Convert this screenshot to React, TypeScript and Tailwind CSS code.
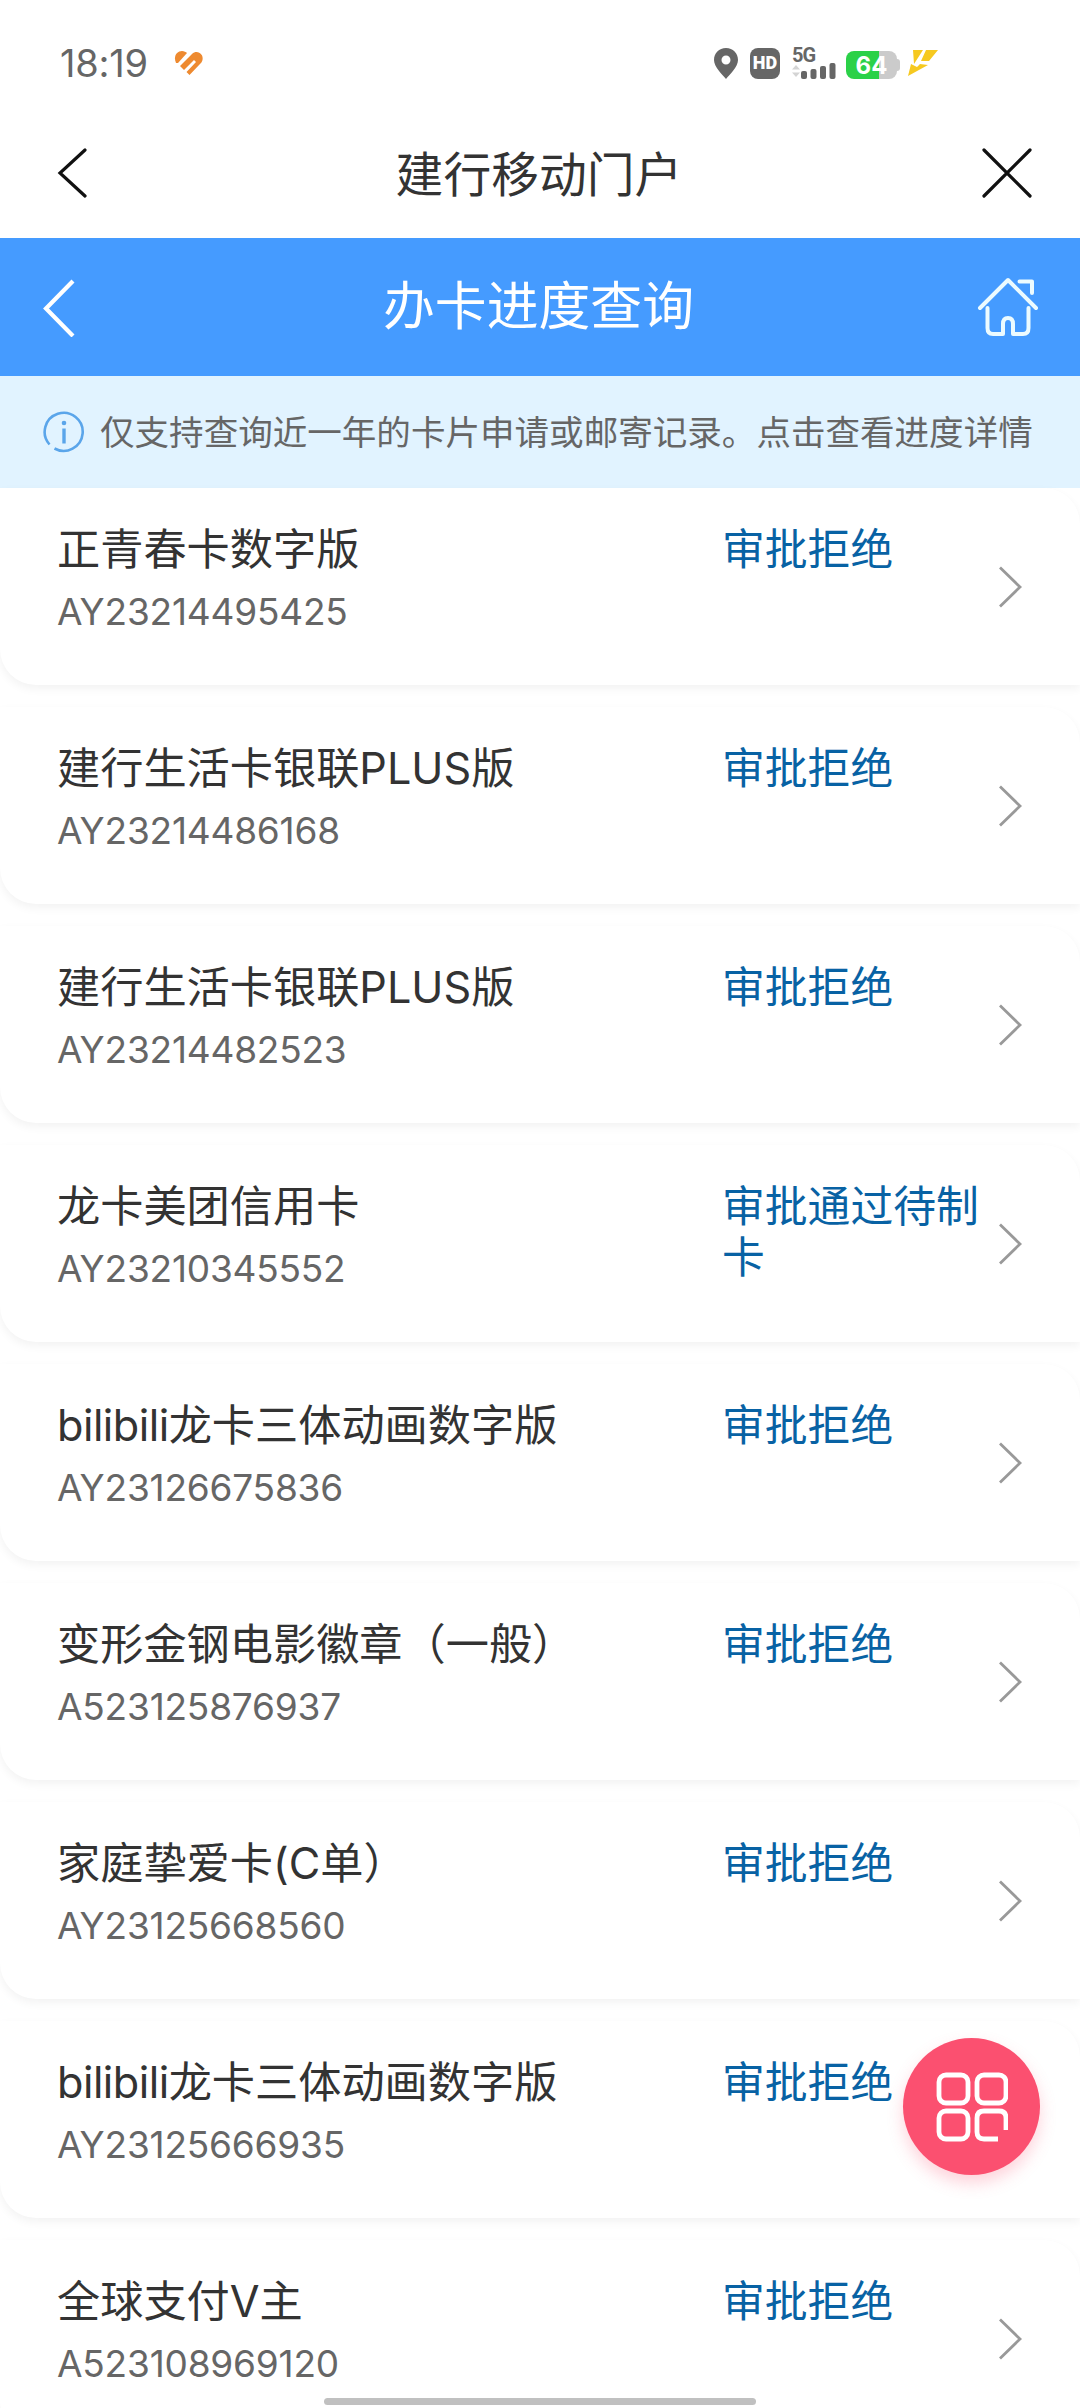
import React from "react";

type Row = { title: React.ReactNode; code: string; status: string };

const Latin = ({ children, className = "" }: { children: string; className?: string }) => (
  <span className={`font-['Inter'] leading-none ${className}`}>{children}</span>
);

const rows: Row[] = [
  { title: "正青春卡数字版", code: "AY23214495425", status: "审批拒绝" },
  { title: <>建行生活卡银联<Latin>PLUS</Latin>版</>, code: "AY23214486168", status: "审批拒绝" },
  { title: <>建行生活卡银联<Latin>PLUS</Latin>版</>, code: "AY23214482523", status: "审批拒绝" },
  { title: "龙卡美团信用卡", code: "AY23210345552", status: "审批通过待制卡" },
  { title: <><Latin className="tracking-[-0.500px]">bilibili</Latin>龙卡三体动画数字版</>, code: "AY23126675836", status: "审批拒绝" },
  { title: "变形金钢电影徽章（一般）", code: "A523125876937", status: "审批拒绝" },
  { title: <>家庭挚爱卡<Latin>(C</Latin>单）</>, code: "AY23125668560", status: "审批拒绝" },
  { title: <><Latin className="tracking-[-0.500px]">bilibili</Latin>龙卡三体动画数字版</>, code: "AY23125666935", status: "审批拒绝" },
  { title: <>全球支付<Latin>V</Latin>主</>, code: "A523108969120", status: "审批拒绝" },
];

function StatusBar() {
  return (
    <div className="flex h-[126px] items-center pl-[60px] text-[#666]">
      <span className="w-[114px] font-['Inter'] text-[38px] leading-none tracking-[-0.200px]">18:19</span>
      <svg className="h-7 w-[30px]" viewBox="0 0 30 28">
        <path d="M2 14C-1 7 3 2 8 2C10 2 12 3 13 4L4 14Z" fill="#ee8a30" />
        <path d="M6 17L18 5C23 0 30 5 28.500 11C28 13 27 14 26 15L15.500 26L12.500 23L22 13L20 11L10 21Z" fill="#ee8a30" />
      </svg>
      <svg className="ml-[510px] h-[31px] w-[24px]" viewBox="0 0 24 31" fill="#666">
        <path fillRule="evenodd" d="M12 0C5 0 0 5 0 12c0 7 8 14 12 19 4-5 12-12 12-19C24 5 19 0 12 0Zm0 7.500a4.500 4.500 0 1 1 0 9 4.500 4.500 0 0 1 0-9Z" />
      </svg>
      <span className="ml-3 flex h-[31px] w-[30px] items-center justify-center rounded-lg bg-[#666] font-['Roboto'] text-[18px] leading-none font-black text-white">
        HD
      </span>
      <span className="ml-3 flex h-[31px] w-[44px] flex-col">
        <span className="h-[15px] font-['Roboto'] text-[20px] leading-[15px] font-bold tracking-[-1px]">5G</span>
        <svg className="h-4 w-[44px]" viewBox="0 0 44 16" fill="#666">
          <path d="M0 6.500L4 2L8 6.500ZM0 9.500L4 14L8 9.500Z" fill="#d4d4d4" />
          <rect x="9" y="8" width="6" height="8" rx="2" />
          <rect x="18.500" y="6" width="6" height="10" rx="2" />
          <rect x="28" y="3" width="6" height="13" rx="2" />
          <rect x="37.500" y="0" width="6" height="16" rx="2" />
        </svg>
      </span>
      <span className="mt-[3px] ml-[10px] flex h-7 items-center">
        <span className="flex h-7 w-[51px] items-center justify-center rounded-lg bg-linear-to-r from-[#2bd148] from-64% to-[#cbcbcb] to-64% pt-0.5 font-['Inter'] text-[24px] leading-none font-bold text-white">
          64
        </span>
        <span className="h-3 w-[3px] rounded-r-sm bg-[#cbcbcb]" />
      </span>
      <svg className="ml-[8px] h-[26px] w-[30px]" viewBox="0 0 30 26">
        <path d="M5 0H15L6 14ZM18 0H30L21 11H13ZM3 14L9 17L12 14L20 15L0 26Z" fill="#f6c920" />
      </svg>
    </div>
  );
}

function AppBar() {
  return (
    <div className="flex h-28 items-center justify-between pr-12 pl-[56px]">
      <svg className="h-[50px] w-10 -translate-y-[9px]" viewBox="0 0 40 50" fill="none" stroke="#111" strokeWidth="3.200" strokeLinecap="round">
        <path d="M29 2L4 25L29 48" />
      </svg>
      <h1 className="-translate-y-[10px] text-[47.800px] leading-none text-[#333]">建行移动门户</h1>
      <svg className="h-[50px] w-[50px] -translate-y-[9px]" viewBox="0 0 50 50" fill="none" stroke="#111" strokeWidth="3.200" strokeLinecap="round">
        <path d="M2 2L48 48M48 2L2 48" />
      </svg>
    </div>
  );
}

function PageHeader() {
  return (
    <div className="flex h-[138px] items-center justify-between bg-[#459bff] pr-[41px] pl-[42px] text-white">
      <svg className="h-[58px] w-[58px] translate-y-[1px]" viewBox="0 0 58 58" fill="none" stroke="currentColor" strokeWidth="4.200">
        <path d="M31 2L4 29.500L31 57" />
      </svg>
      <h2 className="-translate-y-[4px] text-[51.840px] leading-none">办卡进度查询</h2>
      <svg className="h-[60px] w-[62px]" viewBox="0 0 62 60" fill="none" stroke="#ecfbff" strokeWidth="4" strokeLinecap="round" strokeLinejoin="round">
        <path d="M3 31L31 3L59 31M42.500 4.500H55V16" />
        <path d="M10.500 31V51Q10.500 57 16 57H26V47Q26 41 31 41T36 47V57H46Q51.500 57 51.500 51V31" />
      </svg>
    </div>
  );
}

function Notice() {
  return (
    <div className="flex h-28 items-center bg-[#e1f3ff] pl-[43px] text-[#666]">
      <svg className="h-[42px] w-[42px]" viewBox="0 0 42 42" fill="none" stroke="#5aa5ea" strokeWidth="2.600">
        <path d="M6.500 33.500A19 19 0 1 1 11.500 37.500" />
        <path d="M21 17.500V32.500" strokeWidth="3.400" />
        <circle cx="21" cy="12" r="2.300" fill="#5aa5ea" stroke="none" />
      </svg>
      <p className="ml-[15px] -translate-y-[2px] text-[34.560px] leading-none whitespace-nowrap">
        仅支持查询近一年的卡片申请或邮寄记录。点击查看进度详情
      </p>
    </div>
  );
}

function RecordCard({ row }: { row: Row }) {
  return (
    <li className="flex h-[197px] shrink-0 rounded-tr-[36px] rounded-bl-[36px] bg-white pl-[57px] shadow-[0_4px_10px_rgba(0,0,0,0.05)]">
      <div className="w-[665px] pt-[33px]">
        <h3 className="h-[50px] text-[43.200px] leading-[50px] whitespace-nowrap text-[#333]">{row.title}</h3>
        <p className="mt-4 font-['Inter'] text-[37px] leading-[50px] tracking-[-0.200px] text-[#666]">{row.code}</p>
      </div>
      <p className="w-[262px] pt-[33px] text-[42.800px] leading-[51px] text-[#0862a4]">{row.status}</p>
      <svg className="mt-[78px] ml-[14px] h-[42px] w-[26px]" viewBox="0 0 26 42" fill="none" stroke="#999" strokeWidth="2.800">
        <path d="M2 1.500L22 21L2 40.500" />
      </svg>
    </li>
  );
}

export default function App() {
  return (
    <div className="relative h-[2408px] w-[1080px] overflow-hidden bg-white font-['Noto_Sans_CJK_SC',sans-serif]">
      <StatusBar />
      <AppBar />
      <PageHeader />
      <Notice />
      <ul className="flex flex-col gap-[22px]">
        {rows.map((row) => (
          <RecordCard key={row.code} row={row} />
        ))}
      </ul>
      <button className="absolute top-[2038px] left-[903px] flex h-[137px] w-[137px] items-center justify-center rounded-full bg-[#fb5070] shadow-[0_8px_16px_rgba(251,80,112,0.25)]">
        <svg className="h-[70px] w-[72px]" viewBox="0 0 72 70" fill="none" stroke="#fff" strokeWidth="4.800">
          <rect x="3" y="3" width="29" height="28" rx="7" />
          <rect x="41" y="3" width="29" height="28" rx="7" />
          <rect x="3" y="39" width="29" height="28" rx="7" />
          <path d="M70 58V46Q70 39 63 39H48Q41 39 41 46V60Q41 67 48 67H62" />
        </svg>
      </button>
      <div className="absolute top-[2398px] left-[324px] h-[7px] w-[432px] rounded-full bg-[#c0c0c0]" />
    </div>
  );
}
